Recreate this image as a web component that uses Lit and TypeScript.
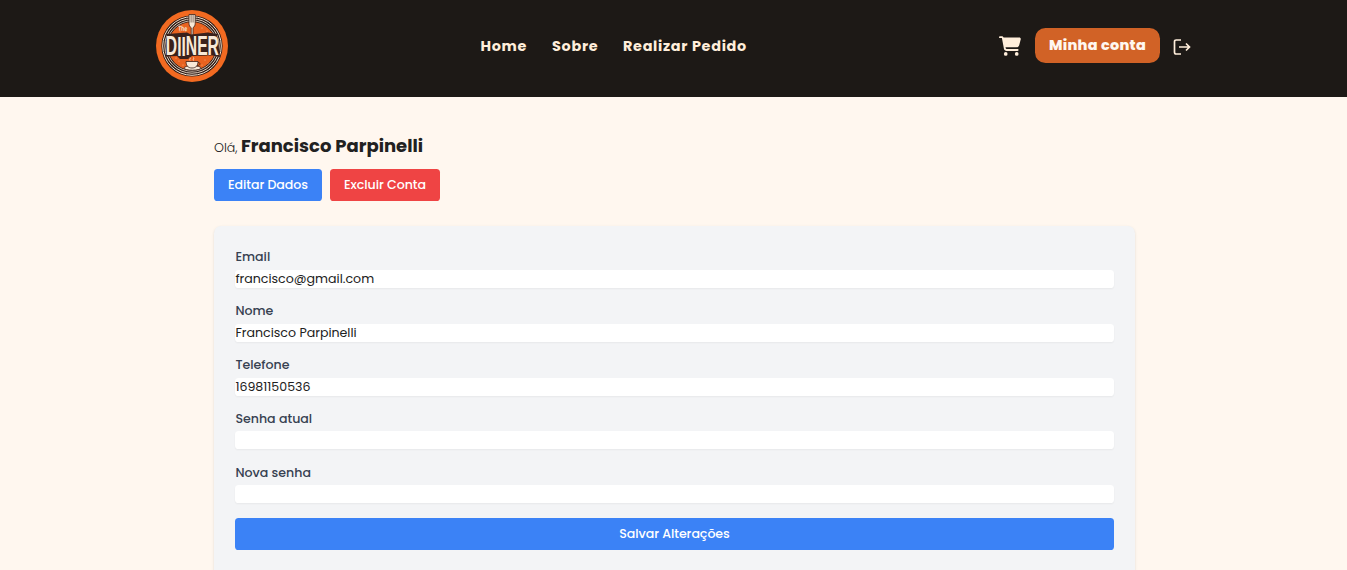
import { LitElement, html, css, svg } from "lit";
import { customElement } from "lit/decorators.js";

const logo = svg`
  <svg class="logo" viewBox="0 0 72 72" aria-label="The Diiner">
    <circle cx="36" cy="36" r="36" fill="#f26a21"/>
    <circle cx="36" cy="36" r="30.6" fill="#2b1a17"/>
    <g fill="none" stroke="#f6e3cd">
      <circle cx="36" cy="36" r="29.3" stroke-width="1"/>
      <circle cx="36" cy="36" r="27.2" stroke-width=".9"/>
      <circle cx="36" cy="36" r="25.2" stroke-width=".8"/>
    </g>
    <circle cx="36" cy="36" r="24" fill="#e9621f"/>
    <g fill="#ffc58e">
      <circle cx="24" cy="21" r=".5"/><circle cx="29" cy="23" r=".5"/><circle cx="46" cy="18" r=".5"/>
      <circle cx="51" cy="21" r=".5"/><circle cx="48" cy="23" r=".4"/><circle cx="23" cy="51" r=".5"/>
      <circle cx="20" cy="48" r=".5"/><circle cx="49" cy="50" r=".5"/><circle cx="46" cy="55" r=".5"/>
      <circle cx="52" cy="53" r=".4"/><circle cx="27" cy="55" r=".5"/>
    </g>
    <path d="M33 4.500h6.200v9c0 2-.9 3.500-2.200 4.200V26h-1.800v-8.300C33.900 17 33 15.500 33 13.500z" fill="#f8e9d7" stroke="#3a211b" stroke-width=".8"/>
    <path d="M35.100 5v7.500M37.100 5v7.500" stroke="#3a211b" stroke-width=".6"/>
    <text class="the" x="22" y="20.500" transform="rotate(4 22 20)" textLength="9" lengthAdjust="spacingAndGlyphs">The</text>
    <path d="M11 24 31 22.500l4 2 17-2 9 1.500 3 23-10-2-18 1-4 3h-8l-3-3-11 .5z" fill="#3a211b"/>
    <text class="sign" transform="translate(9.800 45) scale(.56 1)"><tspan>D</tspan><tspan dy="1.200">II</tspan><tspan dy="-1.200">NER</tspan></text>
    <g stroke="#3a211b" stroke-width=".8" fill="#f8e9d7">
      <ellipse cx="36.500" cy="58" rx="8.500" ry="2.200"/>
      <path d="M30 51.500h12c0 4-2 6.500-6 6.500s-6-2.500-6-6.500z"/>
      <path d="M42 52.500c3 0 2.500 3.200-.8 3" fill="none"/>
      <path d="M34 50.500c-1-1.500 1-1.800 0-3M37.500 50.500c-1-1.500 1-1.800 0-3" fill="none" stroke="#f8e9d7"/>
    </g>
  </svg>`;

@customElement("app-root")
export class AppRoot extends LitElement {
  static styles = css`
    :host { display: block; height: 570px; overflow: hidden; background: #fff7ef; color: #212121;
      font-family: Poppins, Inter, "Open Sans", sans-serif; font-size: 12.6px; }
    * { box-sizing: border-box; }
    header { height: 97px; background: #1d1916; }
    .bar { display: grid; grid-template-columns: 324.500px 1fr auto; width: 1035px; margin-left: 156px; height: 92px; align-items: center; }
    .logo { display: block; width: 72px; height: 72px; }
    .the { font: 700 7px "Liberation Sans", sans-serif; fill: #f8e9d7; }
    .sign { font: 700 28px "Liberation Sans", sans-serif; fill: #f8e9d7; stroke: #3a211b; stroke-width: 1px; paint-order: stroke; }
    nav { display: flex; gap: 25.500px; }
    .link { color: #ffeedb; font-weight: 700; font-size: 14.4px; line-height: 21px; letter-spacing: .7px; white-space: nowrap; }
    .l1 { width: 46px; } .l2 { width: 45.500px; } .l3 { width: 123px; }
    .tools { display: flex; align-items: center; }
    .cart { width: 22px; height: 20px; margin-right: 14px; fill: #ffeedb; }
    .account { width: 125px; height: 35px; border: 0; border-radius: 10.500px; background: #d16226; color: #fff7ef; font: inherit; font-weight: 800;
      font-size: 14.4px; letter-spacing: .3px; padding: 0; margin-right: 13px; margin-top: -2px; white-space: nowrap; }
    .exit { width: 18px; height: 18px; fill: none; stroke: #ffeedb; stroke-width: 1.7; margin-top: 1px; }
    main { width: 921px; margin-left: 214px; padding-top: 36px; }
    .hello { margin: 0; height: 25px; line-height: 26px; white-space: nowrap; font-weight: 300; }
    .name { font-size: 18px; font-weight: 700; }
    .actions { display: flex; gap: 8px; margin-top: 11px; }
    .btn { border: 0; border-radius: 3.6px; height: 32px; padding: 0; color: #fff; font: inherit; font-weight: 500; letter-spacing: -.05px; background: #3b82f6; white-space: nowrap; }
    .edit { width: 108px; }
    .delete { width: 110px; background: #ef4444; }
    form { margin-top: 25px; height: 400px; padding: 21px; border-radius: 7.2px; background: #f3f4f6; box-shadow: 0 1px 3px #0000001a, 0 1px 2px -1px #0000001a; }
    .field { height: 54px; display: flex; flex-direction: column; }
    .label { height: 18px; line-height: 19px; color: #374151; font-weight: 500; text-indent: .4px; }
    .input { height: 18.400px; width: 100%; margin-top: 4.700px; padding: 0; border: 0; border-radius: 3.6px; background: #fff; color: #212121; font: inherit;
      box-shadow: 0 1px 2px #0000000d; outline: 0; text-indent: .4px; }
    .field:nth-of-type(n + 4) .input { margin-top: 4px; }
    .save { width: 100%; display: block; margin-top: 1px; }
  `;

  private fields = [
    { label: "Email", value: "francisco@gmail.com" },
    { label: "Nome", value: "Francisco Parpinelli" },
    { label: "Telefone", value: "16981150536" },
    { label: "Senha atual", value: "" },
    { label: "Nova senha", value: "" },
  ];

  render() {
    return html`
      <header>
        <div class="bar">
          ${logo}
          <nav>
            <a class="link l1">Home</a><a class="link l2">Sobre</a><a class="link l3">Realizar Pedido</a>
          </nav>
          <div class="tools">
            <svg class="cart" viewBox="0 0 576 512"><path d="M0 24C0 10.700 10.700 0 24 0h45.500c22 0 41.500 12.800 50.600 32h411c26.300 0 45.500 25 38.600 50.400l-41 152.300c-8.500 31.400-37 53.300-69.500 53.300H170.700l5.400 28.500c2.200 11.300 12.100 19.500 23.600 19.500H488c13.300 0 24 10.700 24 24s-10.700 24-24 24H199.700c-34.600 0-64.300-24.600-70.700-58.500L77.400 54.500c-.7-3.800-4-6.500-7.900-6.500H24C10.700 48 0 37.300 0 24zm128 440a48 48 0 1 1 96 0 48 48 0 1 1-96 0zm336-48a48 48 0 1 1 0 96 48 48 0 1 1 0-96z"/></svg>
            <button class="account">Minha conta</button>
            <svg class="exit" viewBox="0 0 18 18"><path d="M8 2H3.200Q1.500 2 1.500 3.700v10.600Q1.500 16 3.200 16H8M6 9h10.500M13 5.500 16.500 9 13 12.500"/></svg>
          </div>
        </div>
      </header>
      <main>
        <p class="hello">Olá, <span class="name">Francisco Parpinelli</span></p>
        <div class="actions"><button class="btn edit">Editar Dados</button><button class="btn delete">Excluir Conta</button></div>
        <form>
          ${this.fields.map((f) => html`<div class="field">
            <label class="label">${f.label}</label>
            <input class="input" aria-label=${f.label} .value=${f.value} />
          </div>`)}
          <button class="btn save" type="button">Salvar Alterações</button>
        </form>
      </main>`;
  }
}
